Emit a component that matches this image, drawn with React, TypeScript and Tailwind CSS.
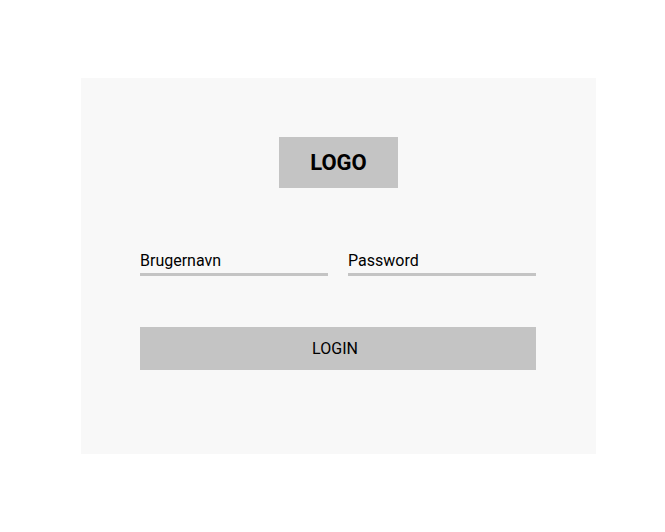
import React from "react";

export default function App() {
  return (
    <div className="w-[665px] h-[532px] bg-white" style={{ fontFamily: "Roboto, 'Liberation Sans', sans-serif" }}>
      <div className="pt-[78px] pl-[81px]">
        <div className="w-[515px] h-[376px] bg-[#f8f8f8] pt-[59px] px-[59px] flex flex-col">
          <div className="self-center w-[119px] h-[51px] bg-[#c4c4c4] flex items-center justify-center text-[22px] leading-[26px] font-bold text-black">
            LOGO
          </div>
          <div className="mt-[63px] flex gap-[20px]">
            <div className="w-[188px] flex flex-col">
              <span className="text-[16px] leading-[19px] text-black">Brugernavn</span>
              <div className="mt-[3px] h-[3px] bg-[#c4c4c4]" />
            </div>
            <div className="w-[188px] flex flex-col">
              <span className="text-[16px] leading-[19px] text-black">Password</span>
              <div className="mt-[3px] h-[3px] bg-[#c4c4c4]" />
            </div>
          </div>
          <div className="mt-[51px] w-[396px] h-[43px] bg-[#c4c4c4] flex items-center justify-center pr-[6px] text-[16px] leading-[19px] text-black">
            LOGIN
          </div>
        </div>
      </div>
    </div>
  );
}
